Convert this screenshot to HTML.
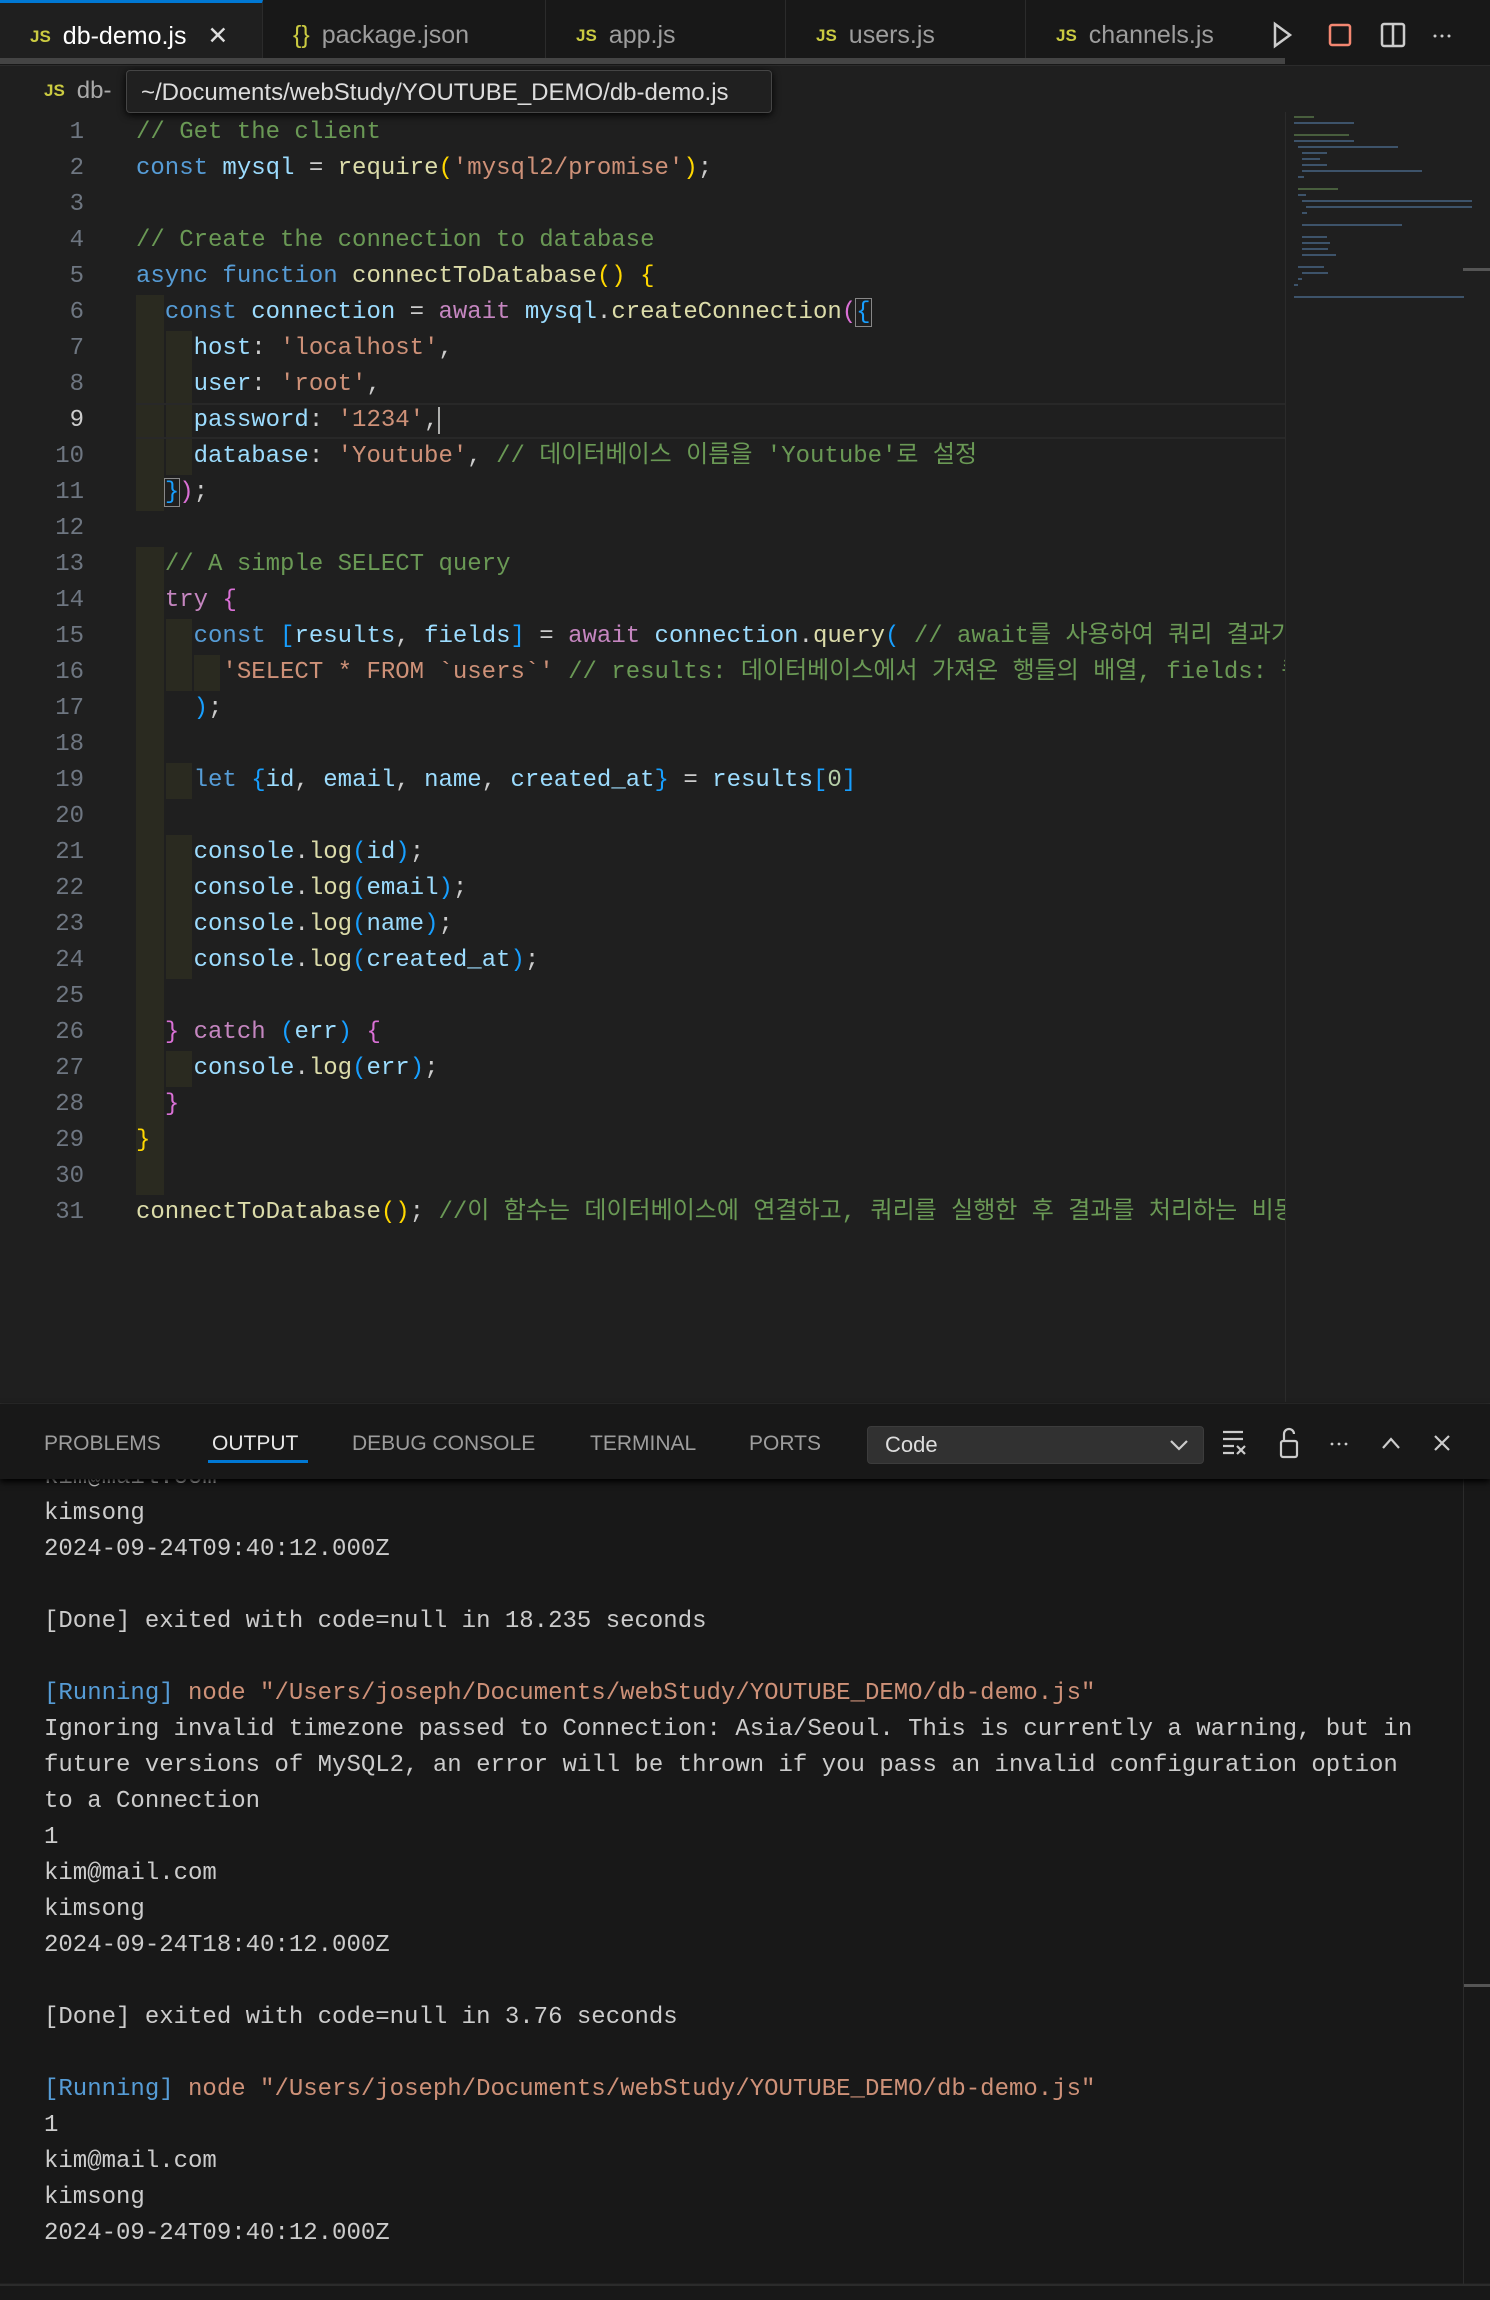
<!DOCTYPE html>
<html><head><meta charset="utf-8">
<style>
*{margin:0;padding:0;box-sizing:border-box}
body{width:1490px;height:2300px;background:#1f1f1f;overflow:hidden;position:relative;font-family:"Liberation Sans","Noto Sans CJK KR",sans-serif;color:#ccc}
.tabs{position:absolute;left:0;top:0;width:1490px;height:66px;background:#181818;border-bottom:1px solid #2b2b2b}
.tab{position:absolute;top:0;height:62px;border-right:1px solid #2b2b2b;font-size:25px;color:#9d9d9d;line-height:70px;padding-left:30px;white-space:nowrap}
.tab.act{background:#1f1f1f;color:#fff;border-top:3px solid #0078d4;line-height:66px}
.js{color:#cbcb41;font-weight:bold;font-size:17px;margin-right:12px;vertical-align:2px}
.hs{position:absolute;left:0;top:58px;width:1285px;height:6px;background:#444}
.crumb{position:absolute;left:44px;top:77px;font-size:24px;color:#aaa}
.tip{position:absolute;left:126px;top:70px;width:646px;height:43px;background:#202020;border:1px solid #454545;border-radius:4px;font-size:24px;color:#ddd;line-height:43px;padding-left:14px;box-shadow:0 2px 8px #000}
.code{position:absolute;left:0;top:115px;width:1285px;height:1280px;overflow:hidden;font-family:"Liberation Mono","Noto Sans CJK KR",monospace;font-size:24px}
.ln{position:absolute;left:0;width:84px;text-align:right;color:#6e7681;height:36px;line-height:36px}
.l{position:absolute;left:136px;height:36px;line-height:36px;white-space:pre;color:#ccc}
.c{color:#6a9955}.k{color:#569cd6}.v{color:#9cdcfe}.f{color:#dcdcaa}.s{color:#ce9178}.p{color:#c586c0}.y{color:#ffd700}.m{color:#da70d6}.b{color:#179fff}.n{color:#b5cea8}
.hl{position:absolute;background:#2a2a20}
.mini{position:absolute;left:1285px;top:112px;width:178px;height:1290px;background:#1f1f1f;border-left:1px solid #2b2b2b}
.panel{position:absolute;left:0;top:1403px;width:1490px;height:880px;background:#181818;border-top:1px solid #2b2b2b}
.phead{position:absolute;left:0;top:0;width:1490px;height:75px;background:#181818;box-shadow:0 3px 6px #000;z-index:2}
.pt{position:absolute;top:28px;font-size:21px;color:#9d9d9d}
.out{position:absolute;left:44px;font-family:"Liberation Mono",monospace;font-size:24px;color:#ccc;white-space:pre;line-height:36px}
.status{position:absolute;left:0;top:2284px;width:1490px;height:16px;background:#181818;border-top:2px solid #2b2b2b}
</style></head><body>
<div class="tabs">
 <div class="tab act" style="left:0;width:263px"><span class="js">JS</span>db-demo.js <span style="margin-left:14px;color:#ddd">✕</span></div>
 <div class="tab" style="left:263px;width:283px"><span style="color:#cbcb41;margin-right:12px">{}</span>package.json</div>
 <div class="tab" style="left:546px;width:240px"><span class="js">JS</span>app.js</div>
 <div class="tab" style="left:786px;width:240px"><span class="js">JS</span>users.js</div>
 <div class="tab" style="left:1026px;width:240px;border:none"><span class="js">JS</span>channels.js</div>
 <div class="hs"></div>
 <svg style="position:absolute;left:1270px;top:20px" width="220" height="30" viewBox="0 0 220 30" fill="none" stroke-width="2.5">
  <path d="M5 4 L20 15 L5 26 Z" stroke="#ccc"/>
  <rect x="60" y="5" width="20" height="20" rx="2" stroke="#f48771"/>
  <rect x="112" y="4" width="22" height="22" rx="2" stroke="#ccc"/><path d="M123 4V26" stroke="#ccc"/>
  <circle cx="165" cy="16" r="1.5" fill="#ccc" stroke="none"/><circle cx="172" cy="16" r="1.5" fill="#ccc" stroke="none"/><circle cx="179" cy="16" r="1.5" fill="#ccc" stroke="none"/>
 </svg>
</div>
<div class="crumb"><span class="js">JS</span>db-</div>
<div class="tip">~/Documents/webStudy/YOUTUBE_DEMO/db-demo.js</div>

<div class="code">
 <div class="hl" style="left:136px;top:180px;width:28px;height:216px"></div>
 <div class="hl" style="left:166px;top:216px;width:26px;height:144px"></div>
 <div class="hl" style="left:136px;top:432px;width:28px;height:648px"></div>
 <div class="hl" style="left:166px;top:504px;width:26px;height:72px"></div>
 <div class="hl" style="left:194px;top:540px;width:26px;height:36px"></div>
 <div class="hl" style="left:166px;top:648px;width:26px;height:36px"></div>
 <div class="hl" style="left:166px;top:720px;width:26px;height:144px"></div>
 <div class="hl" style="left:166px;top:936px;width:26px;height:36px"></div>
 <div style="position:absolute;left:136px;top:288px;width:1149px;height:36px;border-top:2px solid #282828;border-bottom:2px solid #282828"></div>
 <div class="ln" style="top:0">1</div><div class="l" style="top:0"><span class="c">// Get the client</span></div>
 <div class="ln" style="top:36px">2</div><div class="l" style="top:36px"><span class="k">const</span> <span class="v">mysql</span> = <span class="f">require</span><span class="y">(</span><span class="s">'mysql2/promise'</span><span class="y">)</span>;</div>
 <div class="ln" style="top:72px">3</div>
 <div class="ln" style="top:108px">4</div><div class="l" style="top:108px"><span class="c">// Create the connection to database</span></div>
 <div class="ln" style="top:144px">5</div><div class="l" style="top:144px"><span class="k">async</span> <span class="k">function</span> <span class="f">connectToDatabase</span><span class="y">()</span> <span class="y">{</span></div>
 <div class="ln" style="top:180px">6</div><div class="l" style="top:180px">  <span class="k">const</span> <span class="v">connection</span> = <span class="p">await</span> <span class="v">mysql</span>.<span class="f">createConnection</span><span class="m">(</span><span class="b" style="outline:1px solid #888">{</span></div>
 <div class="ln" style="top:216px">7</div><div class="l" style="top:216px">    <span class="v">host</span>: <span class="s">'localhost'</span>,</div>
 <div class="ln" style="top:252px">8</div><div class="l" style="top:252px">    <span class="v">user</span>: <span class="s">'root'</span>,</div>
 <div class="ln" style="top:288px;color:#ccc">9</div><div class="l" style="top:288px">    <span class="v">password</span>: <span class="s">'1234'</span>,<span style="border-left:2px solid #aeafad"></span></div>
 <div class="ln" style="top:324px">10</div><div class="l" style="top:324px">    <span class="v">database</span>: <span class="s">'Youtube'</span>, <span class="c">// 데이터베이스 이름을 'Youtube'로 설정</span></div>
 <div class="ln" style="top:360px">11</div><div class="l" style="top:360px">  <span class="b" style="outline:1px solid #888">}</span><span class="m">)</span>;</div>
 <div class="ln" style="top:396px">12</div>
 <div class="ln" style="top:432px">13</div><div class="l" style="top:432px">  <span class="c">// A simple SELECT query</span></div>
 <div class="ln" style="top:468px">14</div><div class="l" style="top:468px">  <span class="p">try</span> <span class="m">{</span></div>
 <div class="ln" style="top:504px">15</div><div class="l" style="top:504px">    <span class="k">const</span> <span class="b">[</span><span class="v">results</span>, <span class="v">fields</span><span class="b">]</span> = <span class="p">await</span> <span class="v">connection</span>.<span class="f">query</span><span class="b">(</span> <span class="c">// await를 사용하여 쿼리 결과가 반환될 때까지</span></div>
 <div class="ln" style="top:540px">16</div><div class="l" style="top:540px">      <span class="s">'SELECT * FROM `users`'</span> <span class="c">// results: 데이터베이스에서 가져온 행들의 배열, fields: 쿼리</span></div>
 <div class="ln" style="top:576px">17</div><div class="l" style="top:576px">    <span class="b">)</span>;</div>
 <div class="ln" style="top:612px">18</div>
 <div class="ln" style="top:648px">19</div><div class="l" style="top:648px">    <span class="k">let</span> <span class="b">{</span><span class="v">id</span>, <span class="v">email</span>, <span class="v">name</span>, <span class="v">created_at</span><span class="b">}</span> = <span class="v">results</span><span class="b">[</span><span class="n">0</span><span class="b">]</span></div>
 <div class="ln" style="top:684px">20</div>
 <div class="ln" style="top:720px">21</div><div class="l" style="top:720px">    <span class="v">console</span>.<span class="f">log</span><span class="b">(</span><span class="v">id</span><span class="b">)</span>;</div>
 <div class="ln" style="top:756px">22</div><div class="l" style="top:756px">    <span class="v">console</span>.<span class="f">log</span><span class="b">(</span><span class="v">email</span><span class="b">)</span>;</div>
 <div class="ln" style="top:792px">23</div><div class="l" style="top:792px">    <span class="v">console</span>.<span class="f">log</span><span class="b">(</span><span class="v">name</span><span class="b">)</span>;</div>
 <div class="ln" style="top:828px">24</div><div class="l" style="top:828px">    <span class="v">console</span>.<span class="f">log</span><span class="b">(</span><span class="v">created_at</span><span class="b">)</span>;</div>
 <div class="ln" style="top:864px">25</div>
 <div class="ln" style="top:900px">26</div><div class="l" style="top:900px">  <span class="m">}</span> <span class="p">catch</span> <span class="b">(</span><span class="v">err</span><span class="b">)</span> <span class="m">{</span></div>
 <div class="ln" style="top:936px">27</div><div class="l" style="top:936px">    <span class="v">console</span>.<span class="f">log</span><span class="b">(</span><span class="v">err</span><span class="b">)</span>;</div>
 <div class="ln" style="top:972px">28</div><div class="l" style="top:972px">  <span class="m">}</span></div>
 <div class="ln" style="top:1008px">29</div><div class="l" style="top:1008px"><span class="y">}</span></div>
 <div class="ln" style="top:1044px">30</div>
 <div class="ln" style="top:1080px">31</div><div class="l" style="top:1080px"><span class="f">connectToDatabase</span><span class="y">()</span>; <span class="c">//이 함수는 데이터베이스에 연결하고, 쿼리를 실행한 후 결과를 처리하는 비동기 함수</span></div>
</div>
<div class="mini">
 <svg width="178" height="260" style="position:absolute;left:8px;top:0">
  <g fill="#4a6a8a" opacity=".7">
   <rect x="0" y="4" width="20" height="2" fill="#5a7a4a"/><rect x="0" y="10" width="60" height="2"/>
   <rect x="0" y="22" width="55" height="2" fill="#5a7a4a"/><rect x="0" y="28" width="60" height="2"/>
   <rect x="4" y="34" width="100" height="2"/><rect x="8" y="40" width="25" height="2"/><rect x="8" y="46" width="18" height="2"/>
   <rect x="8" y="52" width="25" height="2"/><rect x="8" y="58" width="120" height="2"/><rect x="4" y="64" width="6" height="2"/>
   <rect x="4" y="76" width="40" height="2" fill="#5a7a4a"/><rect x="4" y="82" width="8" height="2"/>
   <rect x="8" y="88" width="170" height="2"/><rect x="12" y="94" width="166" height="2"/><rect x="8" y="100" width="5" height="2"/>
   <rect x="8" y="112" width="100" height="2"/>
   <rect x="8" y="124" width="25" height="2"/><rect x="8" y="130" width="28" height="2"/><rect x="8" y="136" width="26" height="2"/><rect x="8" y="142" width="34" height="2"/>
   <rect x="4" y="154" width="26" height="2"/><rect x="8" y="160" width="26" height="2"/><rect x="4" y="166" width="4" height="2"/><rect x="0" y="172" width="4" height="2"/>
   <rect x="0" y="184" width="170" height="2"/>
  </g>
 </svg>
</div>
<div style="position:absolute;left:1463px;top:268px;width:27px;height:3px;background:#555"></div>

<div class="panel">
 <div class="phead">
  <div class="pt" style="left:44px">PROBLEMS</div>
  <div class="pt" style="left:212px;color:#e7e7e7">OUTPUT</div>
  <div style="position:absolute;left:208px;top:56px;width:100px;height:3px;background:#0078d4"></div>
  <div class="pt" style="left:352px">DEBUG CONSOLE</div>
  <div class="pt" style="left:590px">TERMINAL</div>
  <div class="pt" style="left:749px">PORTS</div>
  <div style="position:absolute;left:867px;top:22px;width:337px;height:38px;background:#313131;border:1px solid #3c3c3c;border-radius:4px;font-size:22px;color:#ddd;line-height:36px;padding-left:17px">Code
   <svg style="position:absolute;right:14px;top:11px" width="20" height="14"><path d="M2 3 L10 11 L18 3" stroke="#ccc" stroke-width="2.2" fill="none"/></svg></div>
  <svg style="position:absolute;left:1220px;top:22px" width="270" height="34" fill="none" stroke="#ccc" stroke-width="2.2">
   <path d="M3 6H23M3 13H23M3 20H14M3 27H14M17 20L25 28M25 20L17 28"/>
   <rect x="61" y="15" width="16" height="16" rx="2"/><path d="M64 15V8a5 5 0 0 1 10 0"/>
   <circle cx="112" cy="18" r="1.4" fill="#ccc" stroke="none"/><circle cx="119" cy="18" r="1.4" fill="#ccc" stroke="none"/><circle cx="126" cy="18" r="1.4" fill="#ccc" stroke="none"/>
   <path d="M163 22L171 13L179 22"/>
   <path d="M215 10L229 24M229 10L215 24"/>
  </svg>
 </div>
 <div class="out" style="top:56px">kim@mail.com
kimsong
2024-09-24T09:40:12.000Z

[Done] exited with code=null in 18.235 seconds

<span style="color:#569cd6">[Running]</span> <span class="s">node "/Users/joseph/Documents/webStudy/YOUTUBE_DEMO/db-demo.js"</span>
Ignoring invalid timezone passed to Connection: Asia/Seoul. This is currently a warning, but in
future versions of MySQL2, an error will be thrown if you pass an invalid configuration option
to a Connection
1
kim@mail.com
kimsong
2024-09-24T18:40:12.000Z

[Done] exited with code=null in 3.76 seconds

<span style="color:#569cd6">[Running]</span> <span class="s">node "/Users/joseph/Documents/webStudy/YOUTUBE_DEMO/db-demo.js"</span>
1
kim@mail.com
kimsong
2024-09-24T09:40:12.000Z</div>
 <div style="position:absolute;left:1463px;top:580px;width:27px;height:3px;background:#555"></div>
 <div style="position:absolute;left:1463px;top:75px;width:1px;height:805px;background:#2b2b2b"></div>
</div>
<div class="status"></div>
</body></html>
